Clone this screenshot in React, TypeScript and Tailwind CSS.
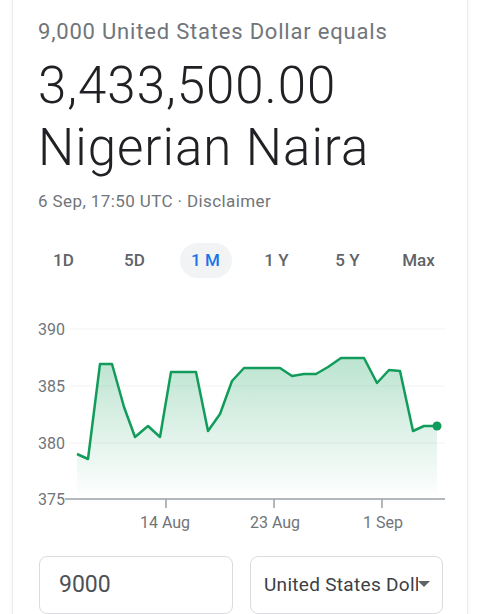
import React from "react";

const pts: [number, number][] = [
  [76, 454], [87, 459], [99, 364], [111, 364], [123, 407], [134, 437], [147, 426], [159, 437],
  [170, 372], [195, 372], [207, 431], [219, 414], [231, 381], [243, 368], [255, 368], [279, 368],
  [291, 376], [303, 374], [315, 374], [327, 367], [340, 358], [363, 358], [376, 383], [388, 370],
  [399, 371], [412, 431], [423, 426], [436, 426],
];

const line = pts.map((p, i) => `${i ? "L" : "M"}${p[0]} ${p[1]}`).join(" ");
const area = `${line} L436 499 L76 499 Z`;

const tabs = ["1D", "5D", "1 M", "1 Y", "5 Y", "Max"];

export default function App() {
  return (
    <div className="w-[480px] h-[614px] overflow-hidden bg-white" style={{ fontFamily: "Roboto, 'Noto Sans', sans-serif" }}>
      <div className="ml-[12px] w-[456px] h-[640px] bg-white border-x border-[#ececec] shadow-[0_0_4px_rgba(0,0,0,0.06)]">
        <div className="pt-[18px] pl-[25px]">
          <div className="text-[22px] leading-[28px] tracking-[0.8px] text-[#70757a] whitespace-nowrap">9,000 United States Dollar equals</div>
          <div className="mt-[9px] text-[51px] leading-[62px] tracking-[1px] font-light text-[#202124] whitespace-nowrap">
            <div>3,433,500.00</div>
            <div>Nigerian Naira</div>
          </div>
          <div className="mt-[10px] text-[17px] leading-[24px] tracking-[0.4px] text-[#70757a]">6 Sep, 17:50 UTC · Disclaimer</div>
          <div className="mt-[30px] -ml-[10px] w-[426px] grid grid-cols-6">
            {tabs.map((t) => (
              <div key={t} className="flex justify-center">
                <div
                  className={
                    t === "1 M"
                      ? "h-[35px] w-[52px] rounded-full bg-[#f1f3f4] flex items-center justify-center text-[17px] font-medium text-[#1a73e8]"
                      : "h-[35px] w-[52px] flex items-center justify-center text-[17px] font-medium text-[#5f6368]"
                  }
                >
                  {t}
                </div>
              </div>
            ))}
          </div>
        </div>
        <svg className="mt-[22px] block" width="456" height="240" viewBox="12 300 456 240">
          <defs>
            <linearGradient id="g" x1="0" y1="0" x2="0" y2="1">
              <stop offset="0" stopColor="#0f9d58" stopOpacity="0.28" />
              <stop offset="1" stopColor="#0f9d58" stopOpacity="0" />
            </linearGradient>
          </defs>
          {[329, 386, 443].map((y) => (
            <line key={y} x1="68" x2="444" y1={y} y2={y} stroke="#f3f3f3" strokeWidth="1" />
          ))}
          <path d={area} fill="url(#g)" />
          <line x1="64" x2="444" y1="499" y2="499" stroke="#9aa0a6" strokeWidth="1.5" />
          {[165, 273, 381].map((x) => (
            <line key={x} x1={x} x2={x} y1="499" y2="508" stroke="#9aa0a6" strokeWidth="1.5" />
          ))}
          <path d={line} fill="none" stroke="#129c5c" strokeWidth="2.5" strokeLinejoin="round" />
          <circle cx="436" cy="426" r="4.5" fill="#129c5c" />
          {[
            ["390", 329],
            ["385", 386],
            ["380", 443],
            ["375", 499],
          ].map(([t, y]) => (
            <text key={t} x="37" y={Number(y) + 5.5} fontSize="16" fill="#70757a" fontFamily="Roboto, sans-serif">
              {t}
            </text>
          ))}
          {[
            ["14 Aug", 164],
            ["23 Aug", 274],
            ["1 Sep", 382],
          ].map(([t, x]) => (
            <text key={t} x={x} y="528" fontSize="16" fill="#70757a" textAnchor="middle" fontFamily="Roboto, sans-serif">
              {t}
            </text>
          ))}
        </svg>
        <div className="mt-[16px] pl-[26px] flex gap-[17px]">
          <div className="w-[194px] h-[58px] rounded-[8px] border border-[#dadce0] flex items-center pl-[19px] text-[23px] text-[#4d5156]">
            9000
          </div>
          <div className="w-[193px] h-[58px] rounded-[8px] border border-[#dadce0] flex items-center pl-[13px] pr-[12px] text-[19px] tracking-[0.3px] text-[#3c4043]">
            <span className="flex-1 min-w-0 overflow-hidden whitespace-nowrap">United States Dollar</span>
            <svg width="12" height="7" viewBox="0 0 12 7" className="shrink-0 mb-[2px]">
              <path d="M0 0 L12 0 L6 6 Z" fill="#5f6368" />
            </svg>
          </div>
        </div>
      </div>
    </div>
  );
}
